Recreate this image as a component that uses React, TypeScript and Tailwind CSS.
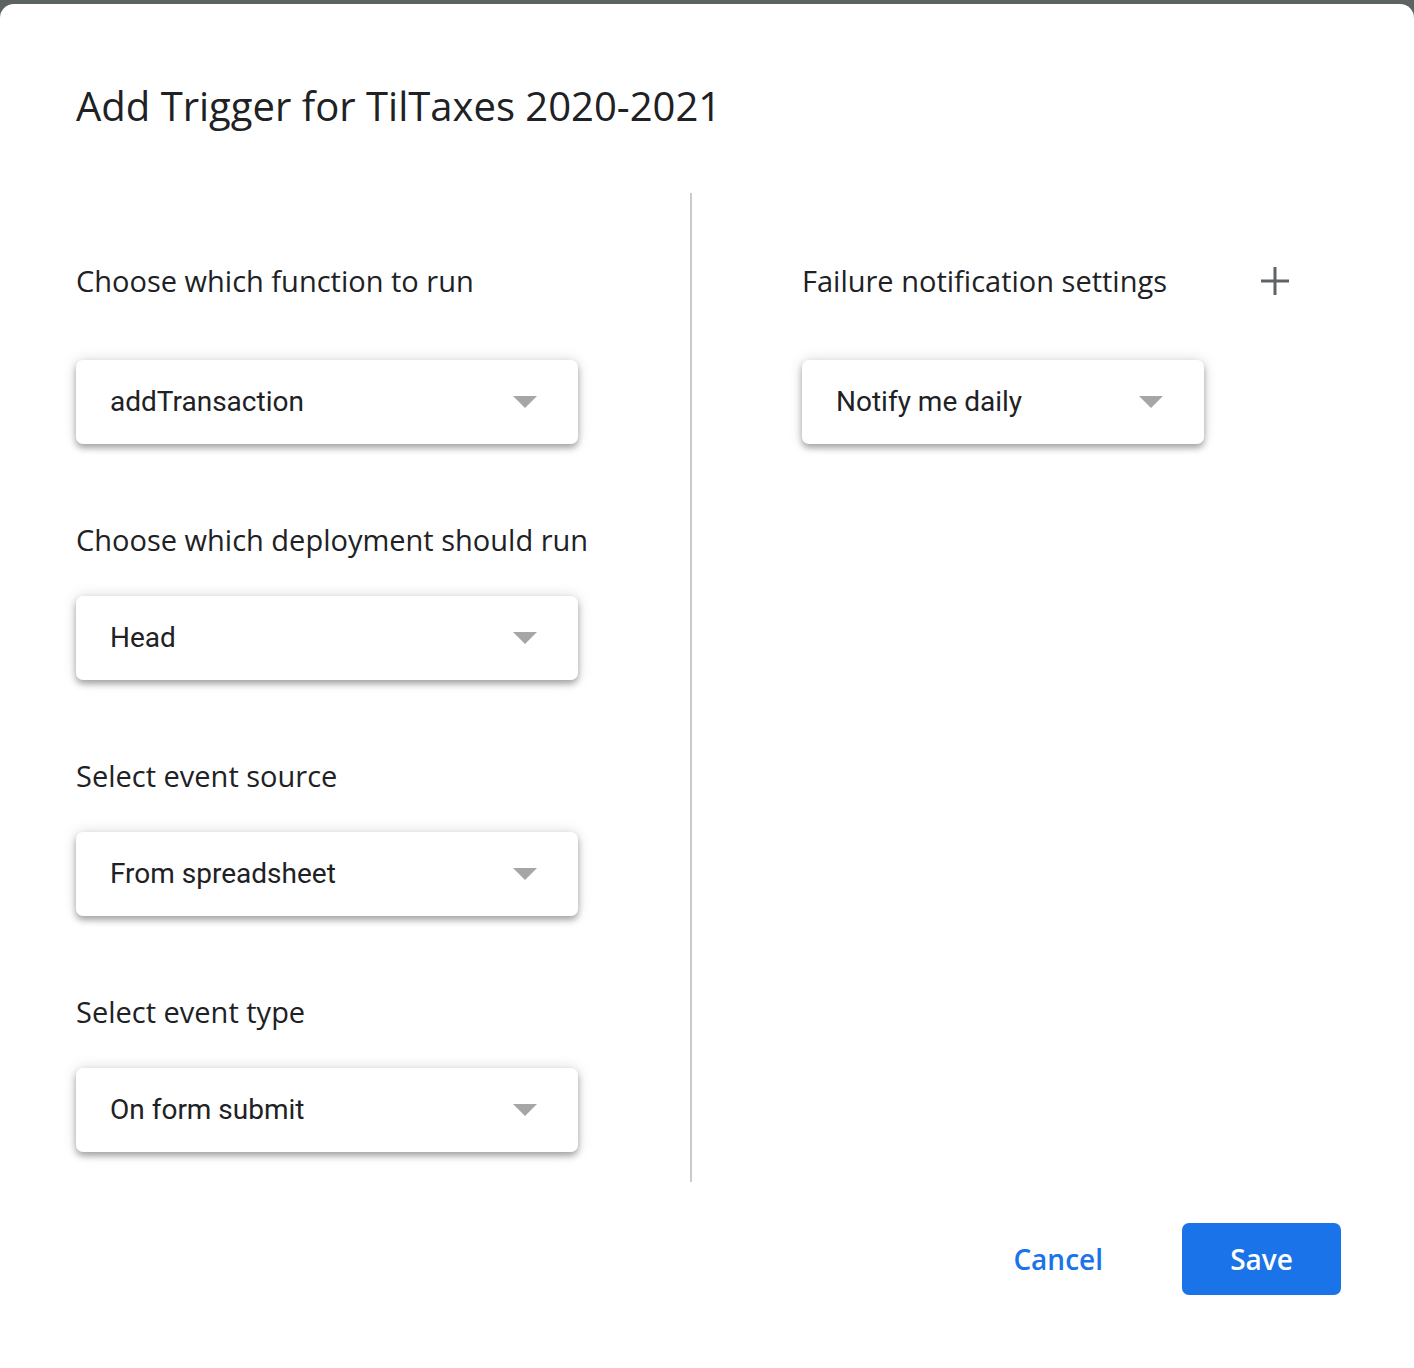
import React from "react";

const roboto = { fontFamily: "Roboto, Arial, sans-serif" };
const sans = { fontFamily: "'Open Sans', Roboto, Arial, sans-serif" };

function Caret() {
  return (
    <svg width="24" height="12" viewBox="0 0 24 12" className="shrink-0">
      <path d="M0 0h24L12 12z" fill="#a6a6a6" />
    </svg>
  );
}

function Select({ value, width }: { value: string; width: string }) {
  return (
    <div
      style={roboto}
      className={`flex h-[84px] items-center justify-between rounded-[7px] bg-white pl-[34px] pr-[41px] text-[28px] text-[#202124] shadow-[0_4px_6px_rgba(0,0,0,0.3),0_0_14px_rgba(0,0,0,0.15)] ${width}`}
    >
      <span>{value}</span>
      <Caret />
    </div>
  );
}

function Label({ children }: { children: React.ReactNode }) {
  return (
    <div style={sans} className="h-[40px] text-[29px] leading-[40px] text-[#202124]">
      {children}
    </div>
  );
}

export default function App() {
  const fields = [
    { label: "Choose which deployment should run", value: "Head" },
    { label: "Select event source", value: "From spreadsheet" },
    { label: "Select event type", value: "On form submit" },
  ];
  return (
    <div className="h-[1368px] w-[1414px] bg-[#5d6360] pt-[4px]" style={sans}>
      <div className="flex h-[1364px] flex-col rounded-t-[14px] bg-white">
        <h1 className="ml-[76px] mt-[76px] h-[52px] text-[40px] leading-[52px] font-normal text-[#202124]">
          Add Trigger for TilTaxes 2020-2021
        </h1>

        <div className="mt-[61px] flex h-[989px]">
          <div className="w-[690px] pl-[76px] pt-[68px]">
            <Label>Choose which function to run</Label>
            <div className="mt-[59px]">
              <Select value="addTransaction" width="w-[502px]" />
            </div>
            {fields.map((f) => (
              <div key={f.label} className="mt-[76px]">
                <Label>{f.label}</Label>
                <div className="mt-[36px]">
                  <Select value={f.value} width="w-[502px]" />
                </div>
              </div>
            ))}
          </div>

          <div className="w-[2px] bg-[#c8cacc]" />

          <div className="flex-1 pl-[110px] pt-[68px]">
            <div className="flex w-[490px] items-center justify-between">
              <Label>Failure notification settings</Label>
              <svg width="30" height="30" viewBox="0 0 30 30" className="mr-[2px]">
                <path d="M15 1v28M1 15h28" stroke="#5f6368" strokeWidth="3" />
              </svg>
            </div>
            <div className="mt-[59px]">
              <Select value="Notify me daily" width="w-[402px]" />
            </div>
          </div>
        </div>

        <div className="mt-[41px] flex items-center justify-end gap-[79px] pr-[73px]">
          <button className="text-[28px] font-semibold text-[#1a73e8]">Cancel</button>
          <button className="h-[72px] w-[159px] rounded-[7px] bg-[#1a73e8] text-[28px] font-semibold text-white">
            Save
          </button>
        </div>
      </div>
    </div>
  );
}
